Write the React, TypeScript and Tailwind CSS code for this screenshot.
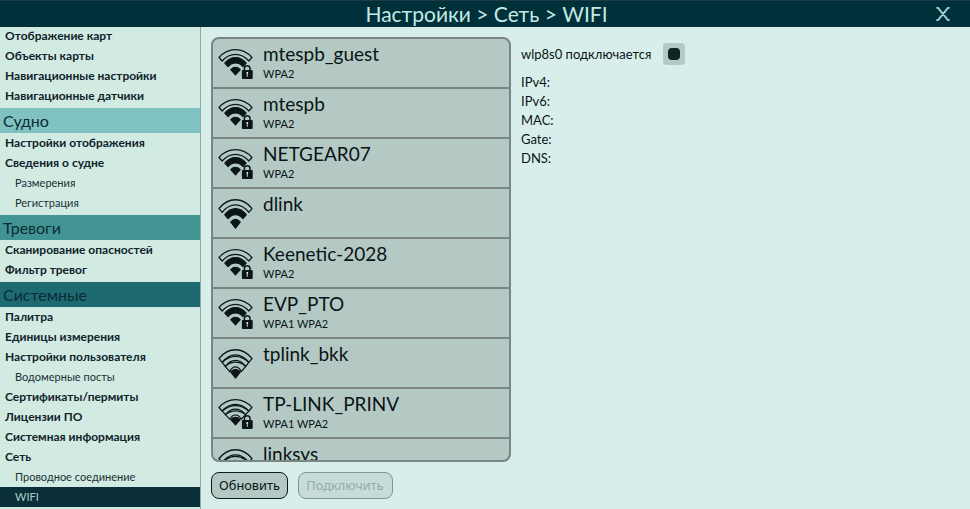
import React from "react";

type NavEntry = { label: string; kind: "item" | "sub" | "head" | "active"; bg?: string };

const nav: NavEntry[] = [
  { label: "Отображение карт", kind: "item" },
  { label: "Объекты карты", kind: "item" },
  { label: "Навигационные настройки", kind: "item" },
  { label: "Навигационные датчики", kind: "item" },
  { label: "Судно", kind: "head", bg: "bg-[#80c1c1]" },
  { label: "Настройки отображения", kind: "item" },
  { label: "Сведения о судне", kind: "item" },
  { label: "Размерения", kind: "sub" },
  { label: "Регистрация", kind: "sub" },
  { label: "Тревоги", kind: "head", bg: "bg-[#429493]" },
  { label: "Сканирование опасностей", kind: "item" },
  { label: "Фильтр тревог", kind: "item" },
  { label: "Системные", kind: "head", bg: "bg-[#1d6a70]" },
  { label: "Палитра", kind: "item" },
  { label: "Единицы измерения", kind: "item" },
  { label: "Настройки пользователя", kind: "item" },
  { label: "Водомерные посты", kind: "sub" },
  { label: "Сертификаты/пермиты", kind: "item" },
  { label: "Лицензии ПО", kind: "item" },
  { label: "Системная информация", kind: "item" },
  { label: "Сеть", kind: "item" },
  { label: "Проводное соединение", kind: "sub" },
  { label: "WIFI", kind: "active" },
];

type Network = { name: string; security?: string; level: 1 | 2 };

const networks: Network[] = [
  { name: "mtespb_guest", security: "WPA2", level: 2 },
  { name: "mtespb", security: "WPA2", level: 2 },
  { name: "NETGEAR07", security: "WPA2", level: 2 },
  { name: "dlink", level: 2 },
  { name: "Keenetic-2028", security: "WPA2", level: 2 },
  { name: "EVP_PTO", security: "WPA1 WPA2", level: 2 },
  { name: "tplink_bkk", level: 1 },
  { name: "TP-LINK_PRINV", security: "WPA1 WPA2", level: 1 },
  { name: "linksys", level: 1 },
];

const navStyles = {
  item: "h-5 pl-[5px] text-[12px] font-bold text-[#10222a]",
  sub: "h-5 pl-[15px] text-[11px] text-[#1c3036]",
  head: "mt-0.5 h-[25px] pl-[3px] text-[16px] text-[#0b2c36]",
  active: "h-5 bg-[#0a2f38] pl-[15px] text-[11px] text-[#a9cfca]",
};

function WifiIcon({ level, locked }: { level: Network["level"]; locked: boolean }) {
  return (
    <svg className="h-9 w-9 shrink-0" viewBox="0 0 36 36" fill="none" stroke="#0c1618" strokeWidth="1.2" strokeLinejoin="round">
      <g transform={locked ? undefined : "matrix(1 0 0 1.12 0 -0.4)"}>
        <path d="M1 11.5Q8 3.7 17.5 3.7T34 11.5L30.8 15Q25 8.3 17.5 8.3T4.2 15Z" />
        {level === 2 ? (
          <path fill="#0c1618" d="M6.8 17.1Q11.4 11.6 17.5 11.6T28.2 17.1L25 20.5Q21.7 16.9 17.5 16.9T10 20.5Z" />
        ) : (
          <>
            <path d="M4.2 15Q10.8 9.6 17.5 9.6T30.8 15L27.6 18.6Q23.2 13.2 17.5 13.2T7.4 18.6Z" />
            <path d="M7.4 18.6Q12 14.8 17.5 14.8T27.6 18.6L23.3 23.2Q20.8 19 17.5 19T11.7 23.2Z" />
          </>
        )}
        <path fill="#0c1618" d="M12.8 23.6Q15 21.3 17.5 21.3T22.2 23.6L17.5 28.9Z" />
      </g>
      {locked && (
        <g stroke="none">
          <path d="M26.4 24.5V22.5a2.8 2.8 0 0 1 5.6 0V24.5" stroke="#0c1618" strokeWidth="1.5" />
          <rect x="23.9" y="24" width="10.8" height="9" rx="1" fill="#0c1618" />
          <path d="M28.5 26h1.6v1.8h-.4v3h-.9v-3h-.3z" fill="#dbe8e4" />
        </g>
      )}
    </svg>
  );
}

export default function App() {
  return (
    <div className="flex h-[509px] w-[970px] flex-col overflow-hidden bg-[#d8eeeb] font-[Lato,'Noto_Sans',sans-serif] text-[#0a1416]">
      <header className="grid h-[27px] shrink-0 grid-cols-[54px_1fr_54px] items-center border-t border-[#1d3c43] bg-[#00303a]">
        <h1 className="col-start-2 pl-[3px] text-center text-[21px] leading-6 whitespace-nowrap text-[#c5eae5]">
          Настройки &gt; Сеть &gt; WIFI
        </h1>
        <button className="flex items-center justify-center" aria-label="Закрыть">
          <svg className="h-3.5 w-3.5" viewBox="0 0 14 14" fill="none" stroke="#9cd2d0" strokeWidth="1.9">
            <path d="M2 .8 12 13.2M12 .8 2 13.2M.3 .8H2.6M11.4 .8H13.7M.3 13.2H2.6M11.4 13.2H13.7" />
          </svg>
        </button>
      </header>
      <div className="flex min-h-0 flex-1">
        <nav className="w-[201px] shrink-0 overflow-hidden border-r border-[#8fa7a5] bg-[#d1eae2]">
          <div className="-mt-px flex flex-col">
            {nav.map((n) => (
              <div key={n.label} className={`flex shrink-0 items-center whitespace-nowrap ${navStyles[n.kind]} ${n.bg ?? ""}`}>
                {n.label}
              </div>
            ))}
          </div>
        </nav>
        <section className="ml-[10px] w-[300px] shrink-0 pt-[10px]">
          <div className="h-[425px] overflow-hidden rounded-[8px] border-2 border-[#7b8583] bg-[#b4c9c4]">
            {networks.map((n) => (
              <div key={n.name} className="flex h-[50px] border-b-2 border-[#7b8583] pt-[3px] pl-[5px]">
                <div className="pt-1">
                  <WifiIcon level={n.level} locked={!!n.security} />
                </div>
                <div className="ml-[9px] whitespace-nowrap">
                  <div className="text-[19px] leading-6">{n.name}</div>
                  <div className="pt-px text-[11px] leading-[14px]">{n.security}</div>
                </div>
              </div>
            ))}
          </div>
          <div className="mt-[10px] flex gap-[10px] font-['Noto_Sans',sans-serif] text-[12.8px]">
            <button className="h-[27px] w-[77px] rounded-[8px] border border-[#0c1a1d] bg-[#b4c9c4] pt-px whitespace-nowrap">Обновить</button>
            <button className="h-[27px] w-[95px] rounded-[8px] border border-[#7d9794] bg-[#c7dcd8] pt-px pr-px whitespace-nowrap text-[#93aaa7]">Подключить</button>
          </div>
        </section>
        <section className="ml-[10px] pt-4 text-[13px]">
          <div className="flex h-[22px] items-center">
            <span className="w-[142px] pt-0.5 whitespace-nowrap">wlp8s0 подключается</span>
            <span className="flex h-[22px] w-[22px] items-center justify-center rounded-[4px] bg-[#b4c9c4]">
              <span className="h-3 w-3 rounded-[4px] bg-[#0f2424]" />
            </span>
          </div>
          <div className="mt-2 leading-[19px]">
            {["IPv4:", "IPv6:", "MAC:", "Gate:", "DNS:"].map((label) => (
              <div key={label}>{label}</div>
            ))}
          </div>
        </section>
      </div>
    </div>
  );
}
